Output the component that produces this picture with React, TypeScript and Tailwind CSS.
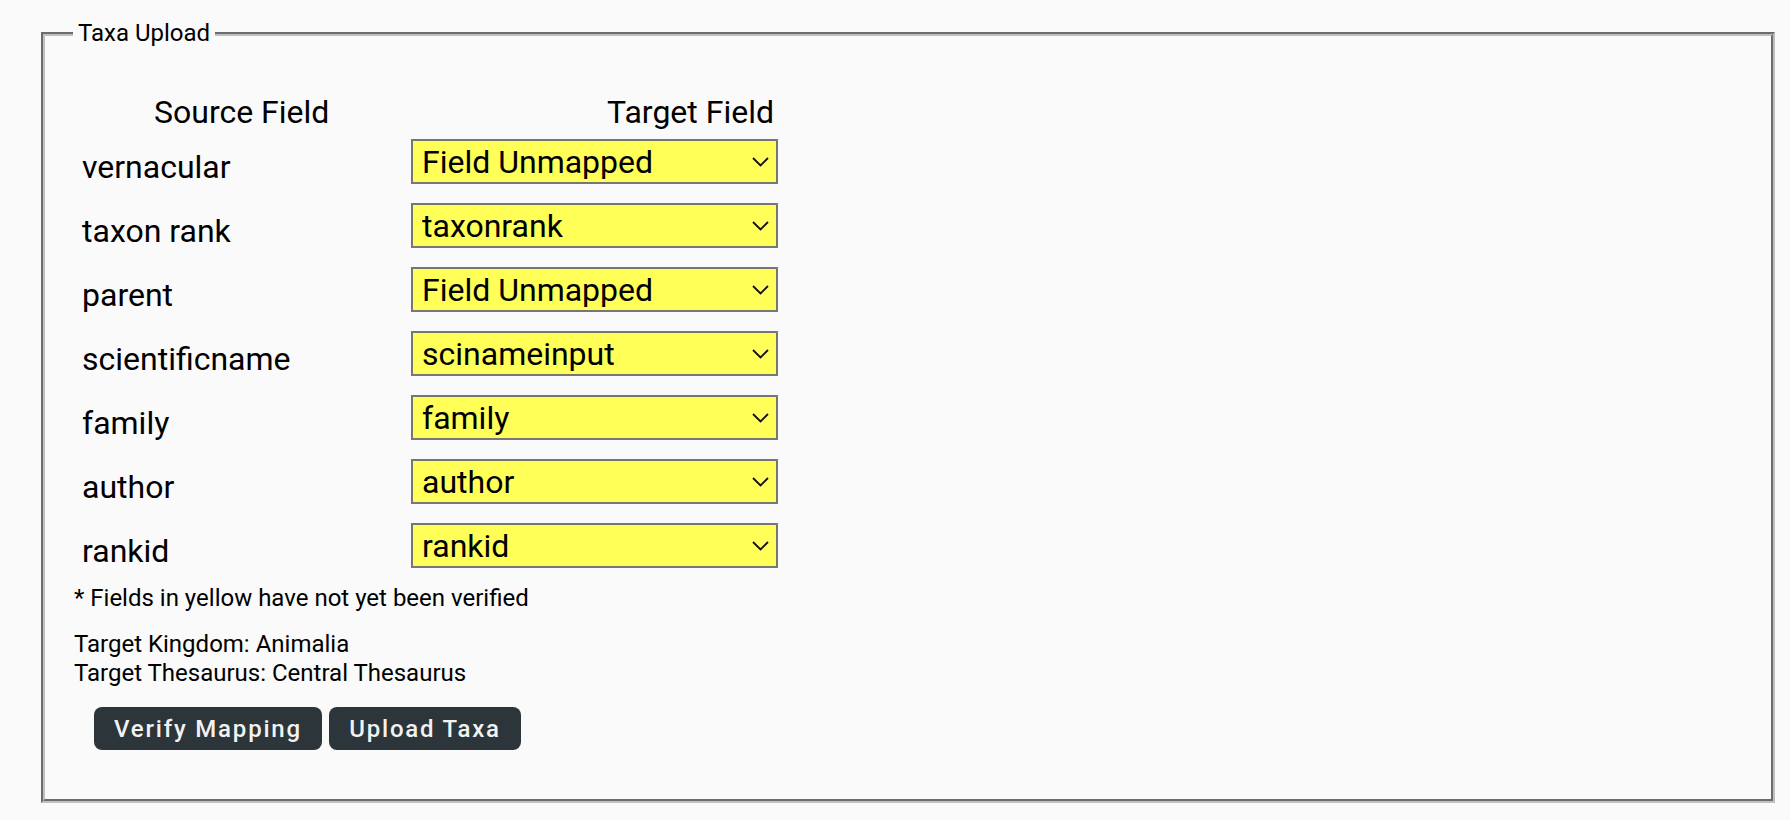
const rows = [
  { source: "vernacular", target: "Field Unmapped" },
  { source: "taxon rank", target: "taxonrank" },
  { source: "parent", target: "Field Unmapped" },
  { source: "scientificname", target: "scinameinput" },
  { source: "family", target: "family" },
  { source: "author", target: "author" },
  { source: "rankid", target: "rankid" },
];

function FieldSelect({ value }: { value: string }) {
  return (
    <div className="relative w-[367px] h-[45px]">
      <select
        defaultValue={value}
        className="appearance-none w-full h-full bg-[#ffff57] border-2 border-[#767676] pl-[9px] pt-[1px] text-[32px] leading-[40px] text-black outline-none"
      >
        <option>{value}</option>
      </select>
      <svg
        className="absolute right-[9px] top-[18px] pointer-events-none"
        width="17"
        height="10"
        viewBox="0 0 17 10"
        fill="none"
      >
        <path d="M1 1l7.5 7.5L16 1" stroke="#111" strokeWidth="1.8" />
      </svg>
    </div>
  );
}

export default function App() {
  return (
    <div className="min-h-screen bg-[#fafafa] pt-[20px] pb-[17px] font-['Roboto',sans-serif] text-black">
      <fieldset className="ml-[41px] mr-[15px] h-[783px] border-[4px] border-[#c0c0c0] [border-style:groove]">
        <legend className="ml-[28px] px-[5px] text-[24px] leading-[27px]">Taxa Upload</legend>

        <div className="pt-[46px] pl-[37px]">
          <div className="flex text-[32px] leading-[38px]">
            <div className="w-[329px] pl-[72px]">Source Field</div>
            <div className="w-[363px] text-right">Target Field</div>
          </div>

          <div className="mt-[8px] flex flex-col gap-[19px]">
            {rows.map((row) => (
              <div key={row.source} className="flex">
                <div className="w-[329px] h-[45px] text-[32px] leading-[57px]">{row.source}</div>
                <FieldSelect value={row.target} />
              </div>
            ))}
          </div>
        </div>

        <div className="pl-[29px] text-[24px]">
          <p className="mt-[17px] leading-[27px]">* Fields in yellow have not yet been verified</p>
          <div className="mt-[18px] leading-[29px]">
            <div>Target Kingdom: Animalia</div>
            <div>Target Thesaurus: Central Thesaurus</div>
          </div>
          <div className="mt-[19px] ml-[20px] flex gap-[7px]">
            <button className="w-[228px] h-[43px] rounded-[8px] bg-[#2c3539] text-[#f2f2f2] text-[24px] font-medium tracking-[1.8px] leading-[44px]">
              Verify Mapping
            </button>
            <button className="w-[192px] h-[43px] rounded-[8px] bg-[#2c3539] text-[#f2f2f2] text-[24px] font-medium tracking-[1.8px] leading-[44px]">
              Upload Taxa
            </button>
          </div>
        </div>
      </fieldset>
    </div>
  );
}
